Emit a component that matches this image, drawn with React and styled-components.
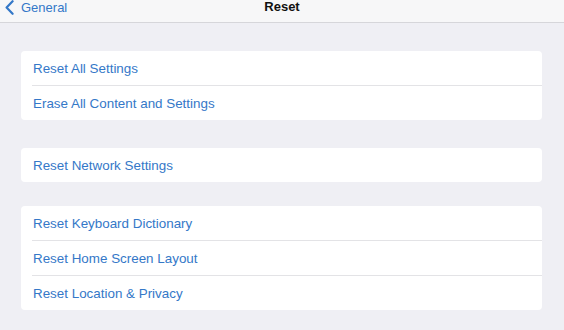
import styled, { createGlobalStyle } from "styled-components";

const GlobalStyle = createGlobalStyle`
  html, body {
    margin: 0;
    padding: 0;
    background: #efeff4;
    font-family: "Liberation Sans", Arial, sans-serif;
  }
`;

const groups = [
  { gap: 28, items: ["Reset All Settings", "Erase All Content and Settings"] },
  { gap: 28, items: ["Reset Network Settings"] },
  {
    gap: 24,
    items: [
      "Reset Keyboard Dictionary",
      "Reset Home Screen Layout",
      "Reset Location & Privacy",
    ],
  },
];

const App = () => {
  return (
    <Page>
      <GlobalStyle />
      <NavBar>
        <BackButton>
          <svg width="9" height="15" viewBox="0 0 9 15">
            <path
              d="M7.6 1.2 L1.6 7.5 L7.6 13.8"
              fill="none"
              stroke="#3478c8"
              strokeWidth="2.2"
              strokeLinecap="round"
              strokeLinejoin="round"
            />
          </svg>
          <span>General</span>
        </BackButton>
        <Title>Reset</Title>
      </NavBar>
      <Content>
        {groups.map((group, i) => (
          <Group key={i} $gap={group.gap}>
            {group.items.map((label, j) => (
              <Row key={label} $first={j === 0}>
                {label}
              </Row>
            ))}
          </Group>
        ))}
      </Content>
    </Page>
  );
};

const Page = styled.div`
  min-height: 330px;
  background: #efeff4;
`;

const NavBar = styled.header`
  position: relative;
  height: 22px;
  background: #f7f7f8;
  border-bottom: 1px solid #d6d6da;
  display: flex;
  align-items: flex-start;
  justify-content: center;
`;

const BackButton = styled.div`
  position: absolute;
  left: 5px;
  top: 0;
  display: flex;
  align-items: center;
  gap: 7px;
  height: 15px;
  color: #3478c8;
  font-size: 13px;

  svg {
    display: block;
  }
`;

const Title = styled.div`
  height: 14px;
  line-height: 14px;
  font-size: 13px;
  font-weight: bold;
  color: #111;
`;

const Content = styled.main`
  padding: 0 22px 20px 21px;
  display: flex;
  flex-direction: column;
`;

const Group = styled.section`
  margin-top: ${(props) => props.$gap}px;
  background: #fff;
  border-radius: 4px;
  display: flex;
  flex-direction: column;
`;

const Row = styled.div`
  height: 34px;
  display: flex;
  align-items: center;
  font-size: 13.4px;
  color: #3478c8;
  border-top: ${(props) => (props.$first ? "none" : "1px solid #e3e3e6")};
  margin-left: ${(props) => (props.$first ? "0" : "11px")};
  padding-left: ${(props) => (props.$first ? "12px" : "1px")};
`;

export default App;
